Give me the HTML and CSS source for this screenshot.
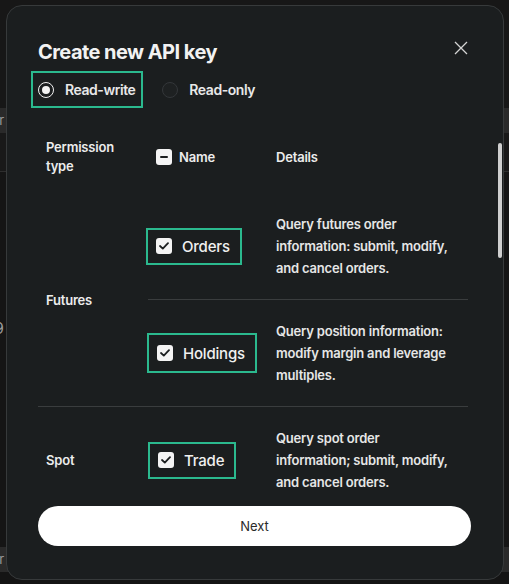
FILE: index.html
```html
<!DOCTYPE html>
<html lang="en">
<head>
<meta charset="utf-8">
<title>Create new API key</title>
<link rel="stylesheet" href="styles.css">
</head>
<body>
<div class="page">
  <div class="bg-top"></div>
  <div class="bg-strip"><span>Order</span></div>
  <div class="bg-band"></div>
  <div class="bg-rest"><span class="bg-num">9</span></div>
  <div class="bg-strip"><span>Order</span></div>
</div>

<div class="overlay">
  <div class="modal">
    <div class="modal-head">
      <h2 class="title">Create new API key</h2>
      <button class="close" aria-label="Close">
        <svg width="14" height="14" viewBox="0 0 14 14"><path d="M1 1L13 13M13 1L1 13" stroke="#d4d4d4" stroke-width="1.3" fill="none"/></svg>
      </button>
    </div>

    <div class="mode">
      <label class="opt active"><span class="radio on"></span><span>Read-write</span></label>
      <label class="opt"><span class="radio"></span><span>Read-only</span></label>
    </div>

    <div class="scroll">
      <div class="thead">
        <div class="c1">Permission<br>type</div>
        <div class="c2 name-h"><span class="cb minus"></span><span>Name</span></div>
        <div class="c3">Details</div>
      </div>

      <div class="group">
        <div class="c1 glabel">Futures</div>
        <div class="subs">
          <div class="sub">
            <div class="c2"><span class="perm"><span class="cb check"><svg width="10" height="8" viewBox="0 0 10 8"><path d="M1 4L3.8 6.6L9 1.2" stroke="#1b1e1f" stroke-width="1.8" fill="none" stroke-linecap="round" stroke-linejoin="round"/></svg></span>Orders</span></div>
            <div class="c3 det">Query futures order information: submit, modify, and cancel orders.</div>
          </div>
          <div class="sub div">
            <div class="c2 pull"><span class="perm"><span class="cb check"><svg width="10" height="8" viewBox="0 0 10 8"><path d="M1 4L3.8 6.6L9 1.2" stroke="#1b1e1f" stroke-width="1.8" fill="none" stroke-linecap="round" stroke-linejoin="round"/></svg></span>Holdings</span></div>
            <div class="c3 det">Query position information: modify margin and leverage multiples.</div>
          </div>
        </div>
      </div>

      <div class="group last">
        <div class="c1 glabel">Spot</div>
        <div class="subs">
          <div class="sub">
            <div class="c2 shift"><span class="perm"><span class="cb check"><svg width="10" height="8" viewBox="0 0 10 8"><path d="M1 4L3.8 6.6L9 1.2" stroke="#1b1e1f" stroke-width="1.8" fill="none" stroke-linecap="round" stroke-linejoin="round"/></svg></span>Trade</span></div>
            <div class="c3 det">Query spot order information; submit, modify, and cancel orders.</div>
          </div>
        </div>
      </div>
    </div>

    <button class="next">Next</button>
    <div class="thumb"></div>
  </div>
</div>
</body>
</html>
```

FILE: styles.css
```css
* { box-sizing: border-box; }
html, body { margin: 0; padding: 0; }
body {
  width: 509px;
  height: 584px;
  overflow: hidden;
  background: #141414;
  font-family: Inter, "Noto Sans", sans-serif;
  color: #ececec;
}

/* background page */
.page { display: flex; flex-direction: column; height: 584px; }
.bg-top { height: 108px; background: #171717; }
.bg-strip { height: 25px; background: #2a2a2a; color: #9a9a9a; font-size: 13px; line-height: 25px; overflow: hidden; }
.bg-strip span { display: block; margin-left: -31px; }
.bg-band { height: 39px; background: #191919; border-bottom: 1px solid #2e2e2e; }
.bg-rest { height: 375px; background: #151515; }
.bg-num { display: block; margin-top: 146px; margin-left: -6px; font-size: 16px; color: #9a9a9a; }

/* overlay modal */
.overlay { position: fixed; inset: 0; }
.modal {
  position: absolute;
  left: 6px;
  top: 5px;
  width: 498px;
  height: 575px;
  background: #1b1e1f;
  border: 1px solid #373a3b;
  border-radius: 16px;
  padding: 32px 32px 33px 31px;
  display: flex;
  flex-direction: column;
}
.modal-head { display: flex; justify-content: space-between; align-items: flex-start; height: 28px; }
.title {
  margin: 0;
  font-size: 20px;
  line-height: 28px;
  font-weight: 700;
  letter-spacing: -0.55px;
  color: #f2f2f2;
}
.close {
  background: none; border: 0; padding: 0; margin: 3px 3px 0 0;
  width: 14px; height: 14px; display: flex; cursor: pointer;
}

.mode { display: flex; gap: 12px; margin: 5px 0 0 -7px; }
.opt {
  display: flex; align-items: center; gap: 11px;
  height: 37px;
  padding: 0 6px 0 5px;
  border: 2px solid transparent;
  font-size: 14px; font-weight: 600; color: #e8e8e8;
  letter-spacing: -0.45px;
}
.opt.active { border-color: #2bb98e; }
.radio {
  width: 16px; height: 16px; border-radius: 50%;
  border: 1px solid #34373a; background: #1e2122;
  display: flex; align-items: center; justify-content: center;
}
.radio.on { border: 1.5px solid #f2f2f2; background: transparent; }
.radio.on::after { content: ""; width: 8px; height: 8px; border-radius: 50%; background: #f2f2f2; }

/* table */
.scroll { height: 375px; margin-top: 12px; margin-right: 3px; overflow: hidden; }
.thead, .sub {
  display: grid;
  grid-template-columns: 130px 180px;
}
.thead { grid-template-columns: 108px 130px 180px; padding: 18px 12px 17px 0; align-items: center; font-size: 13px; font-weight: 600; line-height: 19px; letter-spacing: -0.2px; }
.c1 { padding-left: 8px; }
.name-h { display: flex; align-items: center; gap: 7px; padding-left: 10px; }
.group { display: grid; grid-template-columns: 108px 1fr; border-bottom: 1px solid #3a3d3e; }
.group.last { border-bottom: 0; }
.glabel { display: flex; align-items: center; font-size: 13px; font-weight: 600; letter-spacing: -0.2px; }
.sub { padding: 20px 12px 20px 0; align-items: center; }
.sub.div { border-top: 1px solid #3a3d3e; margin-left: 2px; grid-template-columns: 128px 180px; }
.pull { margin-left: -1px; }
.shift { padding-left: 2px; }
.det { font-size: 13px; font-weight: 600; line-height: 22px; letter-spacing: -0.2px; color: #e6e6e6; }
.perm {
  display: inline-flex; align-items: center; gap: 10px;
  height: 37px; padding: 0 10px 0 8px;
  border: 2px solid #2bb98e;
  font-size: 15px; font-weight: 500; color: #f0f0f0;
  letter-spacing: -0.2px;
}
.sub.div .perm { height: 40px; }
.cb {
  width: 16px; height: 16px; border-radius: 3px; background: #f4f4f4;
  display: inline-flex; align-items: center; justify-content: center; flex: none;
}
.cb.minus::after { content: ""; width: 8px; height: 2px; background: #1b1e1f; border-radius: 1px; }

.next {
  margin-top: 11px;
  height: 40px;
  border: 0;
  border-radius: 20px;
  background: #ffffff;
  color: #2a2a2a;
  font-family: Inter, "Noto Sans", sans-serif;
  font-size: 13px;
  font-weight: 400;
}
.thumb {
  position: absolute;
  right: 1px; top: 137px;
  width: 4px; height: 115px;
  border-radius: 2px;
  background: #cfcfcf;
}
```
